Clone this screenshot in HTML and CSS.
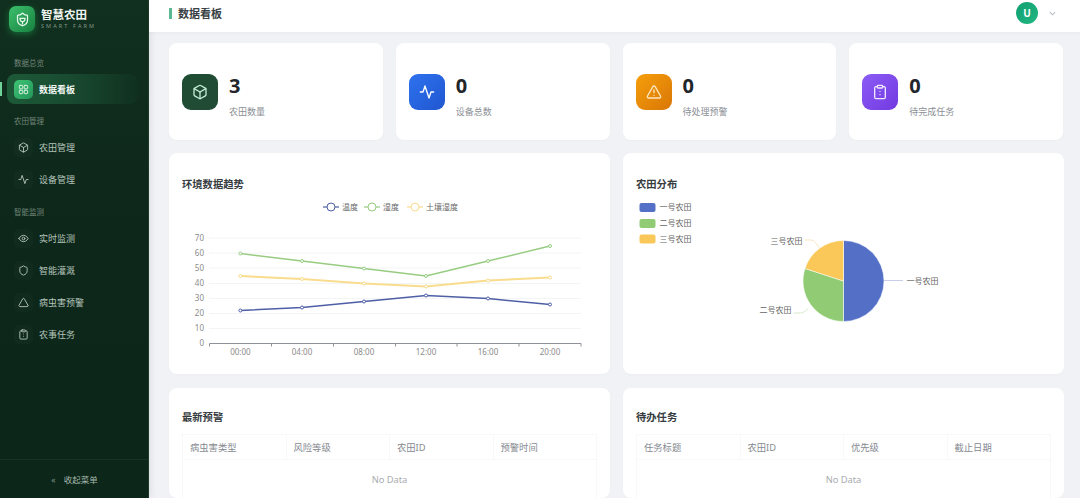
FILE: index.html
```html
<!DOCTYPE html>
<html>
  <head>
    <meta charset="utf-8" />
    <title>智慧农田</title>
    <link rel="stylesheet" href="styles.css">
  </head>
  <body>
    <svg class="icon-defs">
      <symbol id="i-box" viewBox="0 0 24 24">
        <path d="M21 8a2 2 0 0 0-1-1.73l-7-4a2 2 0 0 0-2 0l-7 4A2 2 0 0 0 3 8v8a2 2 0 0 0 1 1.73l7 4a2 2 0 0 0 2 0l7-4A2 2 0 0 0 21 16Z"/>
        <path d="m3.3 7 8.7 5 8.7-5"/>
        <path d="M12 22V12"/>
      </symbol>
      <symbol id="i-grid" viewBox="0 0 24 24">
        <rect x="3" y="3" width="7.5" height="7.5" rx="1.5"/>
        <rect x="13.5" y="3" width="7.5" height="7.5" rx="1.5"/>
        <rect x="3" y="13.5" width="7.5" height="7.5" rx="1.5"/>
        <rect x="13.5" y="13.5" width="7.5" height="7.5" rx="1.5"/>
      </symbol>
      <symbol id="i-activity" viewBox="0 0 24 24">
        <path d="M22 12h-4l-3 9L9 3l-3 9H2"/>
      </symbol>
      <symbol id="i-alert" viewBox="0 0 24 24">
        <path d="m21.73 18-8-14a2 2 0 0 0-3.48 0l-8 14A2 2 0 0 0 4 21h16a2 2 0 0 0 1.73-3"/>
        <path d="M12 9v4"/>
        <path d="M12 17h.01"/>
      </symbol>
      <symbol id="i-triangle" viewBox="0 0 24 24">
        <path d="m21.73 18-8-14a2 2 0 0 0-3.48 0l-8 14A2 2 0 0 0 4 21h16a2 2 0 0 0 1.73-3"/>
      </symbol>
      <symbol id="i-clipboard" viewBox="0 0 24 24">
        <rect x="8" y="2" width="8" height="4" rx="1"/>
        <path d="M16 4h2a2 2 0 0 1 2 2v14a2 2 0 0 1-2 2H6a2 2 0 0 1-2-2V6a2 2 0 0 1 2-2h2"/>
        <path d="M12 11h.01"/>
        <path d="M12 16h.01"/>
      </symbol>
      <symbol id="i-eye" viewBox="0 0 24 24">
        <path d="M2 12s3.5-7 10-7 10 7 10 7-3.5 7-10 7-10-7-10-7Z"/>
        <circle cx="12" cy="12" r="3"/>
      </symbol>
      <symbol id="i-shield" viewBox="0 0 24 24">
        <path d="M20 13c0 5-3.5 7.5-7.66 8.95a1 1 0 0 1-.67-.01C7.5 20.5 4 18 4 13V6a1 1 0 0 1 1-1c2 0 4.5-1.2 6.24-2.72a1.17 1.17 0 0 1 1.52 0C14.51 3.81 17 5 19 5a1 1 0 0 1 1 1z"/>
      </symbol>
    </svg>

    <aside class="sidebar">
      <div class="brand">
        <div class="brand-logo">
          <svg class="icon" viewBox="0 0 24 24">
            <path d="M20 13c0 5-3.5 7.5-7.66 8.95a1 1 0 0 1-.67-.01C7.5 20.5 4 18 4 13V6a1 1 0 0 1 1-1c2 0 4.5-1.2 6.24-2.72a1.17 1.17 0 0 1 1.52 0C14.51 3.81 17 5 19 5a1 1 0 0 1 1 1z"/>
            <path d="M8 10h8c0 3.5-2 5.5-4 5.5S8 13.500 8 10Z"/>
            <path d="M12 19v-3.5"/>
          </svg>
        </div>
        <div>
          <div class="brand-name">智慧农田</div>
          <div class="brand-sub">SMART FARM</div>
        </div>
      </div>

      <nav class="nav">
        <div class="nav-label nav-label-first">数据总览</div>
        <a class="nav-item active">
          <span class="nav-icon"><svg class="icon"><use href="#i-grid"/></svg></span>
          数据看板
        </a>

        <div class="nav-label">农田管理</div>
        <a class="nav-item">
          <span class="nav-icon"><svg class="icon"><use href="#i-box"/></svg></span>
          农田管理
        </a>
        <a class="nav-item">
          <span class="nav-icon"><svg class="icon"><use href="#i-activity"/></svg></span>
          设备管理
        </a>

        <div class="nav-label nav-label-wide">智能监测</div>
        <a class="nav-item">
          <span class="nav-icon"><svg class="icon"><use href="#i-eye"/></svg></span>
          实时监测
        </a>
        <a class="nav-item">
          <span class="nav-icon"><svg class="icon"><use href="#i-shield"/></svg></span>
          智能灌溉
        </a>
        <a class="nav-item">
          <span class="nav-icon"><svg class="icon"><use href="#i-triangle"/></svg></span>
          病虫害预警
        </a>
        <a class="nav-item">
          <span class="nav-icon"><svg class="icon"><use href="#i-clipboard"/></svg></span>
          农事任务
        </a>
      </nav>

      <div class="collapse"><span class="collapse-arrow">«</span>收起菜单</div>
    </aside>

    <div class="main">
      <header class="topbar">
        <h1 class="page-title">数据看板</h1>
        <div class="user">
          <div class="avatar">U</div>
          <svg class="caret" viewBox="0 0 8 5"><path d="M1 1l3 3 3-3"/></svg>
        </div>
      </header>

      <main class="content">
        <section class="stats">
          <div class="card stat">
            <div class="stat-icon green"><svg class="icon"><use href="#i-box"/></svg></div>
            <div class="stat-text">
              <div class="stat-value">3</div>
              <div class="stat-label">农田数量</div>
            </div>
          </div>
          <div class="card stat">
            <div class="stat-icon blue"><svg class="icon"><use href="#i-activity"/></svg></div>
            <div class="stat-text">
              <div class="stat-value">0</div>
              <div class="stat-label">设备总数</div>
            </div>
          </div>
          <div class="card stat">
            <div class="stat-icon orange"><svg class="icon"><use href="#i-alert"/></svg></div>
            <div class="stat-text">
              <div class="stat-value">0</div>
              <div class="stat-label">待处理预警</div>
            </div>
          </div>
          <div class="card stat">
            <div class="stat-icon purple"><svg class="icon"><use href="#i-clipboard"/></svg></div>
            <div class="stat-text">
              <div class="stat-value">0</div>
              <div class="stat-label">待完成任务</div>
            </div>
          </div>
        </section>

        <section class="panels">
          <div class="card panel chart-panel">
            <h2 class="panel-title">环境数据趋势</h2>
            <svg class="chart" viewBox="182 196 415 172">
              <g class="legend">
                <path class="s-blue" d="M323 207h16"/><circle class="s-blue dot-big" cx="331" cy="207" r="4"/>
                <text x="342" y="210">温度</text>
                <path class="s-green" d="M364 207h16"/><circle class="s-green dot-big" cx="372" cy="207" r="4"/>
                <text x="383" y="210">湿度</text>
                <path class="s-yellow" d="M407 207h16"/><circle class="s-yellow dot-big" cx="415" cy="207" r="4"/>
                <text x="426" y="210">土壤湿度</text>
              </g>

              <g class="grid">
                <path d="M209 238h372M209 253h372M209 268h372M209 283.500h372M209 298.500h372M209 313.500h372M209 328.500h372"/>
              </g>
              <path class="axis" d="M209.500 343.500h371.500M209.500 343.500v3M271.500 343.500v3M333.500 343.500v3M395.500 343.500v3M457 343.500v3M519 343.500v3M581 343.500v3"/>

              <g class="tick-y">
                <text x="204" y="241">70</text>
                <text x="204" y="256">60</text>
                <text x="204" y="271">50</text>
                <text x="204" y="286">40</text>
                <text x="204" y="301">30</text>
                <text x="204" y="316">20</text>
                <text x="204" y="331">10</text>
                <text x="204" y="346">0</text>
              </g>
              <g class="tick-x">
                <text x="240.400" y="355">00:00</text>
                <text x="302" y="355">04:00</text>
                <text x="364" y="355">08:00</text>
                <text x="426" y="355">12:00</text>
                <text x="488" y="355">16:00</text>
                <text x="550" y="355">20:00</text>
              </g>

              <polyline class="s-green" points="240.400,253.500 302,261 364,268.500 426,276 488,261 550,246"/>
              <polyline class="s-yellow" points="240.400,276 302,279 364,283.500 426,286.500 488,280.500 550,277.500"/>
              <polyline class="s-blue" points="240.400,310.500 302,307.500 364,301.500 426,295.500 488,298.500 550,304.500"/>
              <g class="dots s-green">
                <circle cx="240.400" cy="253.500" r="1.500"/><circle cx="302" cy="261" r="1.500"/><circle cx="364" cy="268.500" r="1.500"/>
                <circle cx="426" cy="276" r="1.500"/><circle cx="488" cy="261" r="1.500"/><circle cx="550" cy="246" r="1.500"/>
              </g>
              <g class="dots s-yellow">
                <circle cx="240.400" cy="276" r="1.500"/><circle cx="302" cy="279" r="1.500"/><circle cx="364" cy="283.500" r="1.500"/>
                <circle cx="426" cy="286.500" r="1.500"/><circle cx="488" cy="280.500" r="1.500"/><circle cx="550" cy="277.500" r="1.500"/>
              </g>
              <g class="dots s-blue">
                <circle cx="240.400" cy="310.500" r="1.500"/><circle cx="302" cy="307.500" r="1.500"/><circle cx="364" cy="301.500" r="1.500"/>
                <circle cx="426" cy="295.500" r="1.500"/><circle cx="488" cy="298.500" r="1.500"/><circle cx="550" cy="304.500" r="1.500"/>
              </g>
            </svg>
          </div>

          <div class="card panel chart-panel">
            <h2 class="panel-title">农田分布</h2>
            <svg class="chart" viewBox="636 196 414 172">
              <g class="pie-legend">
                <rect class="f-blue" x="639" y="203" width="16" height="9" rx="2"/>
                <text x="659" y="210">一号农田</text>
                <rect class="f-green" x="639" y="219" width="16" height="9" rx="2"/>
                <text x="659" y="226">二号农田</text>
                <rect class="f-yellow" x="639" y="234.500" width="16" height="9" rx="2"/>
                <text x="659" y="241.500">三号农田</text>
              </g>
              <path class="f-blue slice" d="M843 281V240.500A40.500 40.500 0 0 1 843 321.500Z"/>
              <path class="f-green slice" d="M843 281V321.500A40.500 40.500 0 0 1 804.500 268.500Z"/>
              <path class="f-yellow slice" d="M843 281L804.500 268.500A40.500 40.500 0 0 1 843 240.500Z"/>
              <path class="leader l-blue" d="M883.500 280.500h15l4 0"/>
              <path class="leader l-green" d="M808 308c-3 3-5 5-8 5h-7"/>
              <path class="leader l-yellow" d="M819 248c-3-4-5-8-9-8h-6"/>
              <g class="pie-label">
                <text x="906" y="283.500">一号农田</text>
                <text x="759" y="312.500">二号农田</text>
                <text x="770" y="243.500">三号农田</text>
              </g>
            </svg>
          </div>

          <div class="card panel table-panel">
            <h2 class="panel-title">最新预警</h2>
            <table class="table">
              <thead>
                <tr><th>病虫害类型</th><th>风险等级</th><th>农田ID</th><th>预警时间</th></tr>
              </thead>
              <tbody>
                <tr><td colspan="4" class="empty">No Data</td></tr>
              </tbody>
            </table>
          </div>

          <div class="card panel table-panel">
            <h2 class="panel-title">待办任务</h2>
            <table class="table">
              <thead>
                <tr><th>任务标题</th><th>农田ID</th><th>优先级</th><th>截止日期</th></tr>
              </thead>
              <tbody>
                <tr><td colspan="4" class="empty">No Data</td></tr>
              </tbody>
            </table>
          </div>
        </section>
      </main>
    </div>
  </body>
</html>
```

FILE: styles.css
```css
* {
  box-sizing: border-box;
}

html,
body {
  height: 498px;
  margin: 0;
  overflow: hidden;
}

body {
  display: flex;
  font-family: "Noto Sans", "Noto Sans CJK SC", sans-serif;
  background: #f0f2f5;
  color: #303133;
}

.icon-defs {
  display: none;
}

.icon {
  display: block;
  fill: none;
  stroke: currentColor;
  stroke-width: 2;
  stroke-linecap: round;
  stroke-linejoin: round;
}

/* sidebar */
.sidebar {
  display: flex;
  flex-direction: column;
  flex: none;
  width: 149px;
  background: linear-gradient(180deg, #11301f 0%, #0d271a 45%, #0c2619 100%);
  border-right: 1px solid #1c3a2a;
  box-shadow: 2px 0 6px rgba(0, 0, 0, 0.08);
  color: #b9c9bf;
}

.brand {
  display: flex;
  align-items: center;
  gap: 6px;
  height: 34px;
  padding: 4px 0 0 9px;
}

.brand-logo {
  flex: none;
  display: flex;
  align-items: center;
  justify-content: center;
  width: 26px;
  height: 26px;
  border-radius: 7px;
  background: linear-gradient(135deg, #3cc06c 0%, #17803f 100%);
  box-shadow: 0 2px 7px rgba(34, 197, 94, 0.4);
  color: #e8f8ee;
}

.brand-logo .icon {
  width: 15px;
  height: 15px;
}

.brand-name {
  font-size: 11.500px;
  font-weight: 700;
  line-height: 14px;
  color: #eef5f0;
}

.brand-sub {
  font-size: 5.500px;
  line-height: 9px;
  letter-spacing: 2.100px;
  white-space: nowrap;
  color: #84978b;
}

.nav {
  flex: 1;
  display: flex;
  flex-direction: column;
  gap: 2px;
}

.nav-label {
  height: 12px;
  margin: 9px 0 3px 14px;
  font-size: 7.500px;
  line-height: 12px;
  color: #72877a;
}

.nav-label-first {
  margin-top: 23px;
}

.nav-label-wide {
  margin-top: 10px;
}

.nav-item {
  position: relative;
  display: flex;
  align-items: center;
  gap: 6px;
  height: 30px;
  margin: 0 10px 0 7px;
  padding-left: 7px;
  border-radius: 8px;
  font-size: 9px;
  color: #b4c4ba;
}

.nav-item.active {
  background: linear-gradient(90deg, #1d5a38 0%, #184a30 50%, #10301f 100%);
  font-weight: 700;
  color: #f0f7f2;
}

.nav-item.active::before {
  content: "";
  position: absolute;
  left: -7px;
  top: 8px;
  width: 1.500px;
  height: 14px;
  background: #6fd39a;
}

.nav-icon {
  flex: none;
  display: flex;
  align-items: center;
  justify-content: center;
  width: 19px;
  height: 19px;
  border-radius: 5px;
  background: rgba(255, 255, 255, 0.02);
}

.nav-icon .icon {
  width: 11px;
  height: 11px;
}

.active .nav-icon {
  background: linear-gradient(135deg, #3fc474 0%, #23955a 100%);
  color: #e2f6ea;
}

.collapse {
  display: flex;
  align-items: center;
  justify-content: center;
  gap: 8px;
  height: 39px;
  padding-left: 1px;
  border-top: 1px solid #16331f;
  font-size: 8.500px;
  color: #a6b8ac;
}

.collapse-arrow {
  color: #7d9285;
}

/* top bar */
.main {
  flex: 1;
  min-width: 0;
  display: flex;
  flex-direction: column;
}

.topbar {
  flex: none;
  display: flex;
  align-items: center;
  justify-content: space-between;
  height: 32px;
  padding: 0 24px 6px 20px;
  background: #fff;
  box-shadow: 0 1px 4px rgba(0, 0, 0, 0.04);
}

.page-title {
  margin: 0;
  padding-left: 6px;
  border-left: 3px solid #5cb893;
  font-size: 11px;
  line-height: 11px;
  font-weight: 700;
  color: #3a3f45;
}

.user {
  display: flex;
  align-items: center;
  gap: 11px;
}

.avatar {
  display: flex;
  align-items: center;
  justify-content: center;
  width: 22px;
  height: 22px;
  border-radius: 50%;
  background: linear-gradient(135deg, #0e9f6e 0%, #24b784 100%);
  font-size: 10px;
  font-weight: 700;
  color: #fff;
}

.caret {
  width: 7px;
  height: 5px;
  fill: none;
  stroke: #b8bcc2;
  stroke-width: 1.200;
}

/* cards */
.content {
  flex: 1;
  padding: 11px 17px 0 20px;
}

.card {
  background: #fff;
  border-radius: 8px;
  box-shadow: 0 1px 3px rgba(0, 0, 0, 0.02);
}

.stats {
  display: grid;
  grid-template-columns: repeat(4, 1fr);
  gap: 13px;
}

.stat {
  display: flex;
  align-items: center;
  gap: 11px;
  height: 97px;
  padding: 0 13px;
}

.stat-icon {
  flex: none;
  display: flex;
  align-items: center;
  justify-content: center;
  width: 36px;
  height: 36px;
  border-radius: 9px;
  color: #fff;
}

.stat-icon .icon {
  width: 16px;
  height: 16px;
}

.stat-icon.green {
  background: linear-gradient(135deg, #1e4d33 0%, #224a35 100%);
  color: #c4ecd4;
}

.stat-icon.blue {
  background: linear-gradient(135deg, #2f72ee 0%, #2056d0 100%);
}

.stat-icon.orange {
  background: linear-gradient(135deg, #f59e0b 0%, #d97706 100%);
  color: #fde6bd;
}

.stat-icon.purple {
  background: linear-gradient(135deg, #8b5cf6 0%, #7339e0 100%);
  color: #f0e8ff;
}

.stat-text {
  padding-top: 8px;
}

.stat-value {
  font-size: 20px;
  font-weight: 700;
  line-height: 26px;
  color: #22262b;
}

.stat-label {
  margin-top: 7px;
  font-size: 9px;
  line-height: 12px;
  color: #8c9096;
}

.panels {
  display: grid;
  grid-template-columns: repeat(2, 1fr);
  grid-template-rows: 221px 110px;
  gap: 14px 13px;
  margin-top: 13px;
}

.panel {
  padding: 24px 13px 0;
}

.panel-title {
  margin: 0;
  font-size: 10.300px;
  line-height: 14px;
  font-weight: 700;
  color: #363b40;
}

.chart-panel {
  height: 221px;
}

.chart {
  display: block;
  width: 415px;
  height: 172px;
  margin-top: 5px;
  overflow: visible;
}

.chart text {
  font-size: 8px;
  fill: #666;
}

.chart polyline {
  fill: none;
  stroke-width: 1.500;
}

.chart polyline.s-yellow {
  stroke-width: 2;
}

.legend path {
  fill: none;
  stroke-width: 1.200;
}

.dot-big,
.dots circle {
  fill: #fff;
  stroke-width: 1;
}

.s-blue {
  stroke: #4e5fa6;
}

.s-green {
  stroke: #97cc81;
}

.s-yellow {
  stroke: #f9dc8e;
}

.grid path {
  fill: none;
  stroke: #f3f4f5;
}

.axis {
  fill: none;
  stroke: #8d929c;
}

.chart .tick-y text {
  text-anchor: end;
  fill: #8b8b8b;
}

.chart .tick-x text {
  text-anchor: middle;
  fill: #8b8b8b;
}

.f-blue {
  fill: #5470c6;
}

.f-green {
  fill: #91cc75;
}

.f-yellow {
  fill: #fac858;
}

.slice {
  stroke: #fff;
  stroke-width: 0.500;
}

.leader {
  fill: none;
  stroke-width: 0.800;
}

.l-blue {
  stroke: #b7c2e6;
}

.l-green {
  stroke: #cbe5bd;
}

.l-yellow {
  stroke: #f5dfae;
}

.table-panel {
  padding-top: 22px;
}

.table {
  width: 100%;
  margin-top: 10px;
  border-collapse: collapse;
  table-layout: fixed;
  font-size: 9.300px;
}

.table th {
  height: 25px;
  padding: 0 7px;
  border: 1px solid #f7f8f8;
  text-align: left;
  font-weight: 400;
  color: #85898f;
}

.empty {
  height: 40px;
  border: 1px solid #f7f8f8;
  text-align: center;
  color: #a8abb0;
}
```
